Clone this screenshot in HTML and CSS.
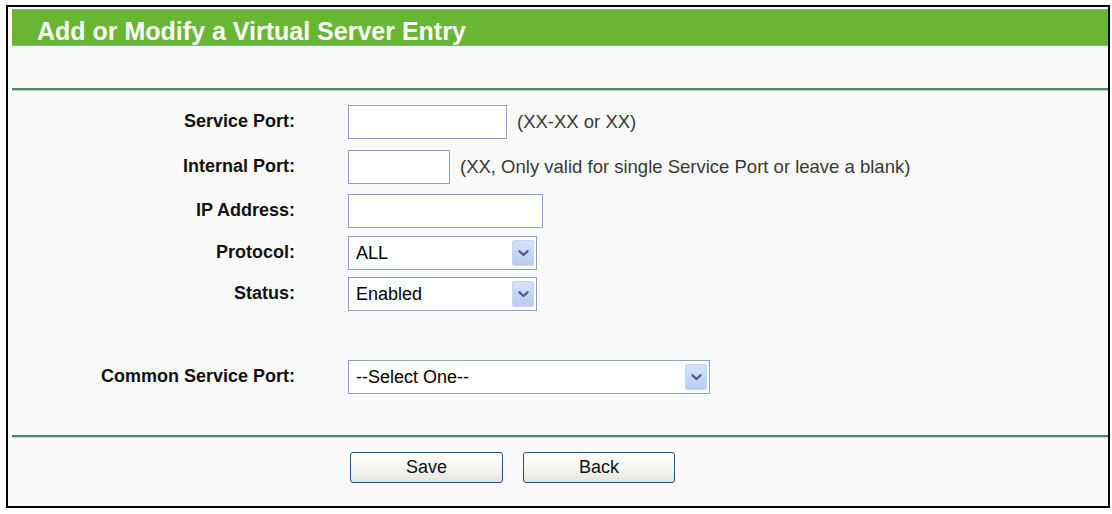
FILE: index.html
```html
<!DOCTYPE html>
<html>
<head>
<meta charset="utf-8">
<title>Add or Modify a Virtual Server Entry</title>
<link rel="stylesheet" href="styles.css">
</head>
<body>
<div class="frame">
  <div class="header">Add or Modify a Virtual Server Entry</div>
  <div class="rule rule-top"></div>
  <form class="form">
    <label class="label">Service Port:</label>
    <div class="control">
      <input class="text w-service" type="text">
      <span class="hint">(XX-XX or XX)</span>
    </div>

    <label class="label">Internal Port:</label>
    <div class="control">
      <input class="text w-internal" type="text">
      <span class="hint">(XX, Only valid for single Service Port or leave a blank)</span>
    </div>

    <label class="label">IP Address:</label>
    <div class="control">
      <input class="text w-ip" type="text">
    </div>

    <label class="label">Protocol:</label>
    <div class="control">
      <div class="select w-proto">
        <select><option>ALL</option><option>TCP</option><option>UDP</option></select>
        <span class="arrow"><svg width="11" height="7" viewBox="0 0 11 7"><path d="M1.5 1.3 L5.5 5 L9.5 1.3" fill="none" stroke="#4a5f8a" stroke-width="2.3" stroke-linecap="round" stroke-linejoin="round"/></svg></span>
      </div>
    </div>

    <label class="label">Status:</label>
    <div class="control">
      <div class="select w-proto">
        <select><option>Enabled</option><option>Disabled</option></select>
        <span class="arrow"><svg width="11" height="7" viewBox="0 0 11 7"><path d="M1.5 1.3 L5.5 5 L9.5 1.3" fill="none" stroke="#4a5f8a" stroke-width="2.3" stroke-linecap="round" stroke-linejoin="round"/></svg></span>
      </div>
    </div>

    <label class="label">Common Service Port:</label>
    <div class="control">
      <div class="select w-common">
        <select><option>--Select One--</option></select>
        <span class="arrow"><svg width="11" height="7" viewBox="0 0 11 7"><path d="M1.5 1.3 L5.5 5 L9.5 1.3" fill="none" stroke="#4a5f8a" stroke-width="2.3" stroke-linecap="round" stroke-linejoin="round"/></svg></span>
      </div>
    </div>
  </form>
  <div class="rule rule-bottom"></div>
  <div class="buttons">
    <button class="btn" type="button">Save</button>
    <button class="btn" type="button">Back</button>
  </div>
</div>
</body>
</html>
```

FILE: styles.css
```css
html, body {
  margin: 0;
  padding: 0;
  background: #ffffff;
}

body {
  font-family: "Liberation Sans", Arial, sans-serif;
}

.frame {
  box-sizing: border-box;
  margin: 5px 0 0 6px;
  width: 1104px;
  height: 503px;
  border: 2px solid #000;
  padding: 2px 0 0 4px;
  background: #fafafa;
}

.header {
  box-sizing: border-box;
  height: 37px;
  padding: 9px 0 0 25px;
  line-height: 25px;
  font-size: 25px;
  font-weight: bold;
  color: #fff;
  background: #68b633;
  border-top: 1px solid #7bc149;
  border-bottom: 1px solid #7cc24a;
}

.rule {
  height: 2px;
  background: #4a8868;
  box-shadow: 0 1px 0 #b9dac8;
}

.rule-top {
  margin-top: 42px;
}

.form {
  display: grid;
  grid-template-columns: 283px auto;
  grid-template-rows: 45px 44px 42px 41px 83px 34px;
  column-gap: 53px;
  align-items: start;
  margin: 15px 0 0;
}

.label {
  height: 34px;
  line-height: 33px;
  text-align: right;
  font-size: 18px;
  font-weight: bold;
  color: #111;
}

.control {
  display: flex;
  align-items: center;
  gap: 10px;
  height: 34px;
}

.text {
  box-sizing: border-box;
  height: 34px;
  margin: 0;
  border: 1px solid #8ea3be;
  background: #fff;
  font: 18px "Liberation Sans", Arial, sans-serif;
  padding: 0 6px;
}

.w-service { width: 159px; }
.w-internal { width: 102px; }
.w-ip { width: 195px; }

.hint {
  font-size: 18.5px;
  color: #383838;
}

.select {
  position: relative;
  box-sizing: border-box;
  height: 34px;
  border: 1px solid #8ea3be;
  background: #fff;
}

.w-proto { width: 189px; }
.w-common { width: 362px; }

.select select {
  appearance: none;
  -webkit-appearance: none;
  box-sizing: border-box;
  width: 100%;
  height: 32px;
  margin: 0;
  border: 0;
  outline: none;
  background: transparent;
  padding: 0 0 0 7px;
  font: 18px "Liberation Sans", Arial, sans-serif;
  color: #000;
}

.arrow {
  position: absolute;
  top: 3px;
  right: 2px;
  bottom: 3px;
  width: 22px;
  box-sizing: border-box;
  display: flex;
  align-items: center;
  justify-content: center;
  border: 1px solid #c6d5f4;
  border-radius: 2px;
  background: linear-gradient(#d6e2fb, #b9cbf1);
  pointer-events: none;
}

.rule-bottom {
  margin-top: 41px;
}

.buttons {
  display: flex;
  gap: 20px;
  margin: 15px 0 0 338px;
}

.btn {
  box-sizing: border-box;
  height: 31px;
  border: 1px solid #2f4d7c;
  border-radius: 3px;
  background: linear-gradient(#ffffff, #f4f4ef 60%, #e4e3db);
  font: 18px "Liberation Sans", Arial, sans-serif;
  color: #111;
  padding: 0;
}

.btn:first-child { width: 153px; }
.btn:last-child { width: 152px; }
```
